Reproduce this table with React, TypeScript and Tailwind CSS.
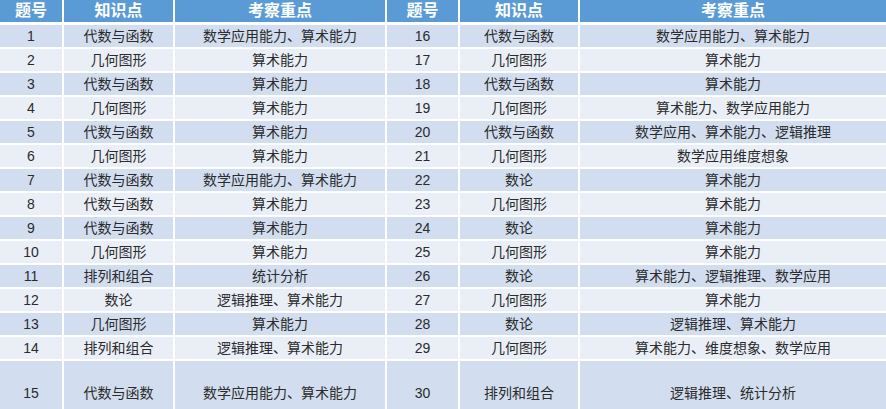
import React from "react";

const left: [string, string, string][] = [
  ["1", "代数与函数", "数学应用能力、算术能力"],
  ["2", "几何图形", "算术能力"],
  ["3", "代数与函数", "算术能力"],
  ["4", "几何图形", "算术能力"],
  ["5", "代数与函数", "算术能力"],
  ["6", "几何图形", "算术能力"],
  ["7", "代数与函数", "数学应用能力、算术能力"],
  ["8", "代数与函数", "算术能力"],
  ["9", "代数与函数", "算术能力"],
  ["10", "几何图形", "算术能力"],
  ["11", "排列和组合", "统计分析"],
  ["12", "数论", "逻辑推理、算术能力"],
  ["13", "几何图形", "算术能力"],
  ["14", "排列和组合", "逻辑推理、算术能力"],
  ["15", "代数与函数", "数学应用能力、算术能力"],
];

const right: [string, string, string][] = [
  ["16", "代数与函数", "数学应用能力、算术能力"],
  ["17", "几何图形", "算术能力"],
  ["18", "代数与函数", "算术能力"],
  ["19", "几何图形", "算术能力、数学应用能力"],
  ["20", "代数与函数", "数学应用、算术能力、逻辑推理"],
  ["21", "几何图形", "数学应用维度想象"],
  ["22", "数论", "算术能力"],
  ["23", "几何图形", "算术能力"],
  ["24", "数论", "算术能力"],
  ["25", "几何图形", "算术能力"],
  ["26", "数论", "算术能力、逻辑推理、数学应用"],
  ["27", "几何图形", "算术能力"],
  ["28", "数论", "逻辑推理、算术能力"],
  ["29", "几何图形", "算术能力、维度想象、数学应用"],
  ["30", "排列和组合", "逻辑推理、统计分析"],
];

const headers = ["题号", "知识点", "考察重点", "题号", "知识点", "考察重点"];

export default function App() {
  return (
    <div
      className="w-[886px] h-[409px] overflow-hidden bg-white"
      style={{ fontFamily: '"Liberation Sans", "Noto Sans CJK SC", sans-serif' }}
    >
      <div className="grid grid-cols-[62px_109px_210px_71px_118px_1fr] gap-x-[2px] bg-white">
        {headers.map((h, i) => (
          <div
            key={i}
            className="h-[22px] bg-[#5b9bd5] text-white font-bold text-[16px] leading-[22px] flex items-center justify-center"
          >
            {h}
          </div>
        ))}
      </div>
      <div className="h-[3px]" />
      <div className="flex flex-col gap-y-[2px]">
        {left.map((l, i) => {
          const r = right[i];
          const bg = i % 2 === 0 ? "bg-[#d2deef]" : "bg-[#eaeff7]";
          const h = i === 14 ? "h-[64px]" : "h-[22px]";
          const cells = [...l, ...r];
          return (
            <div
              key={i}
              className="grid grid-cols-[62px_109px_210px_71px_118px_1fr] gap-x-[2px]"
            >
              {cells.map((c, j) => (
                <div
                  key={j}
                  className={`${bg} ${h} flex items-center justify-center text-[14px] text-[#2b2b2b] whitespace-nowrap`}
                >
                  {c}
                </div>
              ))}
            </div>
          );
        })}
      </div>
    </div>
  );
}
